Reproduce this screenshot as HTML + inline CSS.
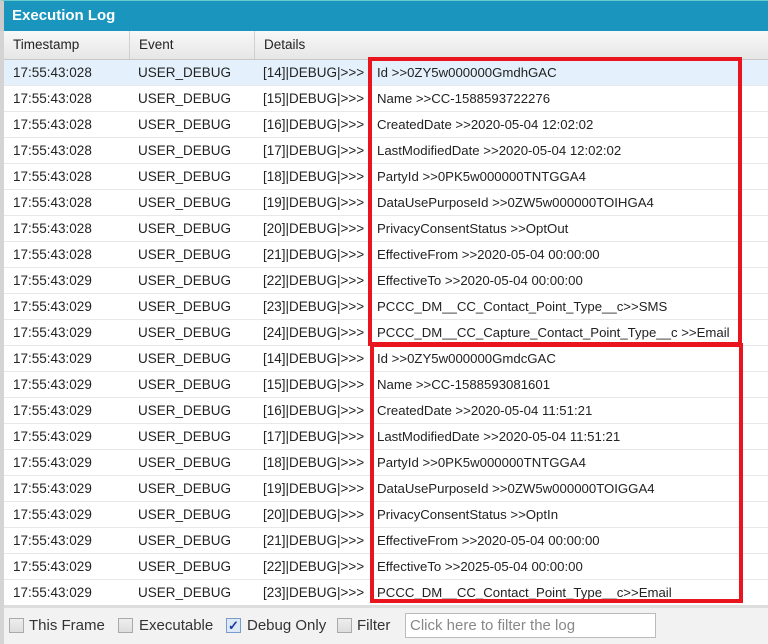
<!DOCTYPE html>
<html><head><style>
*{margin:0;padding:0;box-sizing:border-box}
body{width:768px;height:644px;overflow:hidden;background:#fff;font-family:"Liberation Sans",Tahoma,sans-serif;font-size:13.5px;color:#222;position:relative}
.title{position:absolute;left:0;top:0;width:768px;height:31px;background:#1a95bd;border-top:1px solid #6cc;color:#fff;font-weight:bold;font-size:15px;padding:6px 0 0 8px;border-left:4px solid #ccc}
.frame{position:absolute;left:0;top:31px;width:4px;height:613px;background:#d4d4d4}
.hdr{position:absolute;left:4px;top:31px;width:764px;height:29px;background:linear-gradient(#f8f8f8,#e6e6e6);border-bottom:1px solid #c8c8c8}
.hdr div{position:absolute;top:0;height:28px;line-height:28px;padding-left:9px;border-right:1px solid #d0d0d0}
.row{position:absolute;left:4px;width:764px;height:26px;line-height:26px;border-bottom:1px solid #e8e8e8;white-space:nowrap}
.row span{position:absolute;top:0}
.t{left:9px}.e{left:134px}.d{left:259px}
.row span.d b{font-weight:normal;position:absolute;left:114px;font-size:13.2px}
.box{position:absolute;border:4px solid #e8141e}
.bot{position:absolute;left:4px;top:605px;width:764px;height:39px;background:#f2f2f2;border-top:3px solid #ddd}
.cb{position:absolute;top:10px;width:15px;height:15px;border:1px solid #aaa;background:linear-gradient(#eee,#ddd)}
.lbl{position:absolute;top:9px;font-size:15px;color:#333}
.inp{position:absolute;left:401px;top:5px;width:251px;height:25px;border:1px solid #bbb;background:#fff;color:#888;font-size:15px;padding:3px 4px}
</style></head><body>
<div class="title">Execution Log</div>
<div class="frame"></div>
<div class="hdr"><div style="left:0;width:126px">Timestamp</div><div style="left:126px;width:125px">Event</div><div style="left:251px;width:513px;border-right:none">Details</div></div>
<div class="row" style="top:60px;background:#e4f1fc"><span class="t">17:55:43:028</span><span class="e">USER_DEBUG</span><span class="d">[14]|DEBUG|&gt;&gt;&gt;<b>Id &gt;&gt;0ZY5w000000GmdhGAC</b></span></div>
<div class="row" style="top:86px"><span class="t">17:55:43:028</span><span class="e">USER_DEBUG</span><span class="d">[15]|DEBUG|&gt;&gt;&gt;<b>Name &gt;&gt;CC-1588593722276</b></span></div>
<div class="row" style="top:112px"><span class="t">17:55:43:028</span><span class="e">USER_DEBUG</span><span class="d">[16]|DEBUG|&gt;&gt;&gt;<b>CreatedDate &gt;&gt;2020-05-04 12:02:02</b></span></div>
<div class="row" style="top:138px"><span class="t">17:55:43:028</span><span class="e">USER_DEBUG</span><span class="d">[17]|DEBUG|&gt;&gt;&gt;<b>LastModifiedDate &gt;&gt;2020-05-04 12:02:02</b></span></div>
<div class="row" style="top:164px"><span class="t">17:55:43:028</span><span class="e">USER_DEBUG</span><span class="d">[18]|DEBUG|&gt;&gt;&gt;<b>PartyId &gt;&gt;0PK5w000000TNTGGA4</b></span></div>
<div class="row" style="top:190px"><span class="t">17:55:43:028</span><span class="e">USER_DEBUG</span><span class="d">[19]|DEBUG|&gt;&gt;&gt;<b>DataUsePurposeId &gt;&gt;0ZW5w000000TOIHGA4</b></span></div>
<div class="row" style="top:216px"><span class="t">17:55:43:028</span><span class="e">USER_DEBUG</span><span class="d">[20]|DEBUG|&gt;&gt;&gt;<b>PrivacyConsentStatus &gt;&gt;OptOut</b></span></div>
<div class="row" style="top:242px"><span class="t">17:55:43:028</span><span class="e">USER_DEBUG</span><span class="d">[21]|DEBUG|&gt;&gt;&gt;<b>EffectiveFrom &gt;&gt;2020-05-04 00:00:00</b></span></div>
<div class="row" style="top:268px"><span class="t">17:55:43:029</span><span class="e">USER_DEBUG</span><span class="d">[22]|DEBUG|&gt;&gt;&gt;<b>EffectiveTo &gt;&gt;2020-05-04 00:00:00</b></span></div>
<div class="row" style="top:294px"><span class="t">17:55:43:029</span><span class="e">USER_DEBUG</span><span class="d">[23]|DEBUG|&gt;&gt;&gt;<b>PCCC_DM__CC_Contact_Point_Type__c&gt;&gt;SMS</b></span></div>
<div class="row" style="top:320px"><span class="t">17:55:43:029</span><span class="e">USER_DEBUG</span><span class="d">[24]|DEBUG|&gt;&gt;&gt;<b>PCCC_DM__CC_Capture_Contact_Point_Type__c &gt;&gt;Email</b></span></div>
<div class="row" style="top:346px"><span class="t">17:55:43:029</span><span class="e">USER_DEBUG</span><span class="d">[14]|DEBUG|&gt;&gt;&gt;<b>Id &gt;&gt;0ZY5w000000GmdcGAC</b></span></div>
<div class="row" style="top:372px"><span class="t">17:55:43:029</span><span class="e">USER_DEBUG</span><span class="d">[15]|DEBUG|&gt;&gt;&gt;<b>Name &gt;&gt;CC-1588593081601</b></span></div>
<div class="row" style="top:398px"><span class="t">17:55:43:029</span><span class="e">USER_DEBUG</span><span class="d">[16]|DEBUG|&gt;&gt;&gt;<b>CreatedDate &gt;&gt;2020-05-04 11:51:21</b></span></div>
<div class="row" style="top:424px"><span class="t">17:55:43:029</span><span class="e">USER_DEBUG</span><span class="d">[17]|DEBUG|&gt;&gt;&gt;<b>LastModifiedDate &gt;&gt;2020-05-04 11:51:21</b></span></div>
<div class="row" style="top:450px"><span class="t">17:55:43:029</span><span class="e">USER_DEBUG</span><span class="d">[18]|DEBUG|&gt;&gt;&gt;<b>PartyId &gt;&gt;0PK5w000000TNTGGA4</b></span></div>
<div class="row" style="top:476px"><span class="t">17:55:43:029</span><span class="e">USER_DEBUG</span><span class="d">[19]|DEBUG|&gt;&gt;&gt;<b>DataUsePurposeId &gt;&gt;0ZW5w000000TOIGGA4</b></span></div>
<div class="row" style="top:502px"><span class="t">17:55:43:029</span><span class="e">USER_DEBUG</span><span class="d">[20]|DEBUG|&gt;&gt;&gt;<b>PrivacyConsentStatus &gt;&gt;OptIn</b></span></div>
<div class="row" style="top:528px"><span class="t">17:55:43:029</span><span class="e">USER_DEBUG</span><span class="d">[21]|DEBUG|&gt;&gt;&gt;<b>EffectiveFrom &gt;&gt;2020-05-04 00:00:00</b></span></div>
<div class="row" style="top:554px"><span class="t">17:55:43:029</span><span class="e">USER_DEBUG</span><span class="d">[22]|DEBUG|&gt;&gt;&gt;<b>EffectiveTo &gt;&gt;2025-05-04 00:00:00</b></span></div>
<div class="row" style="top:580px"><span class="t">17:55:43:029</span><span class="e">USER_DEBUG</span><span class="d">[23]|DEBUG|&gt;&gt;&gt;<b>PCCC_DM__CC_Contact_Point_Type__c&gt;&gt;Email</b></span></div>
<div class="box" style="left:368px;top:57px;width:374px;height:289px"></div>
<div class="box" style="left:370px;top:343px;width:373px;height:260px"></div>
<div class="bot">
<div class="cb" style="left:5px"></div><div class="lbl" style="left:25px">This Frame</div>
<div class="cb" style="left:114px"></div><div class="lbl" style="left:135px">Executable</div>
<div class="cb" style="left:222px;border-color:#7a9cc8;background:#dde9f7;color:#1a3aa0;font-size:13px;line-height:13px;text-align:center;font-weight:bold">✓</div><div class="lbl" style="left:243px">Debug Only</div>
<div class="cb" style="left:333px"></div><div class="lbl" style="left:353px">Filter</div>
<div class="inp">Click here to filter the log</div>
</div>
</body></html>
